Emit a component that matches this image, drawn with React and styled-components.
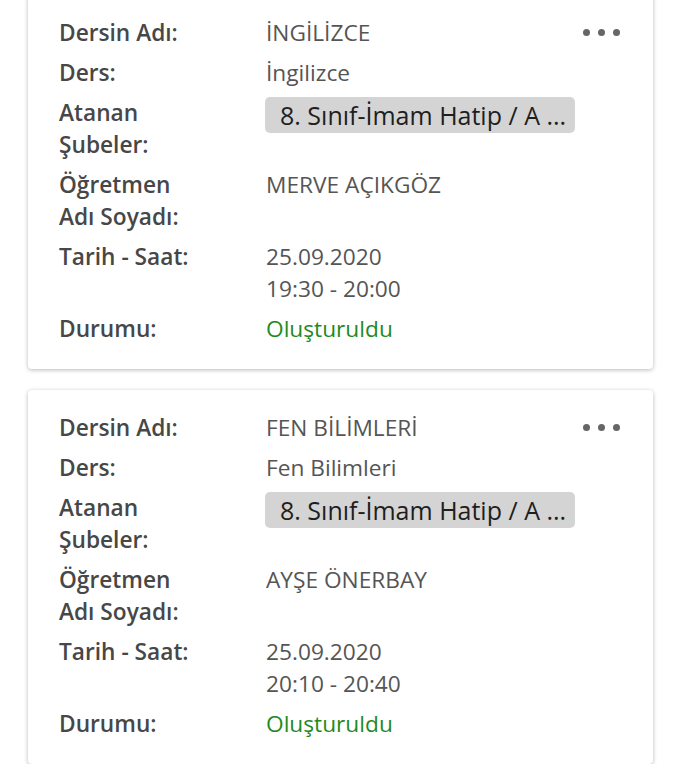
import React from 'react';
import styled, { createGlobalStyle } from 'styled-components';

const GlobalStyle = createGlobalStyle`
  html, body {
    margin: 0;
    padding: 0;
    background: #ffffff;
    font-family: 'Open Sans', 'Noto Sans', sans-serif;
  }
`;

const List = styled.div`
  display: flex;
  flex-direction: column;
  gap: 21px;
  padding: 0 28px;
  margin-top: -5px;
`;

const Card = styled.div`
  position: relative;
  background: #ffffff;
  border-radius: 4px;
  box-shadow: 0 1px 4px rgba(0, 0, 0, 0.28);
  padding: 22px 31px 24px 31px;
`;

const Details = styled.div`
  display: grid;
  grid-template-columns: 207px 1fr;
  row-gap: 8px;
  font-size: 22.7px;
  line-height: 32px;
`;

const Label = styled.div`
  color: #474747;
  font-weight: 600;
`;

const Value = styled.div`
  color: ${props => (props.color ? props.color : '#555555')};
`;

const Chip = styled.div`
  width: 310px;
  height: 36px;
  box-sizing: border-box;
  padding: 0 15px;
  margin-left: -1px;
  border-radius: 5px;
  background: #d4d4d4;
  color: #1e1e1e;
  font-size: 25px;
  line-height: 36px;
  white-space: nowrap;
  overflow: hidden;
`;

const MoreButton = styled.button`
  position: absolute;
  top: 32px;
  right: 31px;
  display: flex;
  gap: 8px;
  padding: 2px;
  border: none;
  background: transparent;

  span {
    width: 7px;
    height: 7px;
    border-radius: 50%;
    background: #666666;
  }
`;

const lessons = [
  {
    name: 'İNGİLİZCE',
    course: 'İngilizce',
    branch: '8. Sınıf-İmam Hatip / A ...',
    teacher: 'MERVE AÇIKGÖZ',
    date: '25.09.2020',
    time: '19:30 - 20:00',
    status: 'Oluşturuldu'
  },
  {
    name: 'FEN BİLİMLERİ',
    course: 'Fen Bilimleri',
    branch: '8. Sınıf-İmam Hatip / A ...',
    teacher: 'AYŞE ÖNERBAY',
    date: '25.09.2020',
    time: '20:10 - 20:40',
    status: 'Oluşturuldu'
  }
];

const LessonCard = ({ lesson }) => (
  <Card>
    <MoreButton>
      <span />
      <span />
      <span />
    </MoreButton>
    <Details>
      <Label>Dersin Adı:</Label>
      <Value>{lesson.name}</Value>
      <Label>Ders:</Label>
      <Value>{lesson.course}</Value>
      <Label>
        Atanan
        <br />
        Şubeler:
      </Label>
      <Value>
        <Chip>{lesson.branch}</Chip>
      </Value>
      <Label>
        Öğretmen
        <br />
        Adı Soyadı:
      </Label>
      <Value>{lesson.teacher}</Value>
      <Label>Tarih - Saat:</Label>
      <Value>
        {lesson.date}
        <br />
        {lesson.time}
      </Value>
      <Label>Durumu:</Label>
      <Value color='#1f8a1f'>{lesson.status}</Value>
    </Details>
  </Card>
);

const App = () => (
  <>
    <GlobalStyle />
    <List>
      {lessons.map(lesson => (
        <LessonCard key={lesson.name} lesson={lesson} />
      ))}
    </List>
  </>
);

export default App;
